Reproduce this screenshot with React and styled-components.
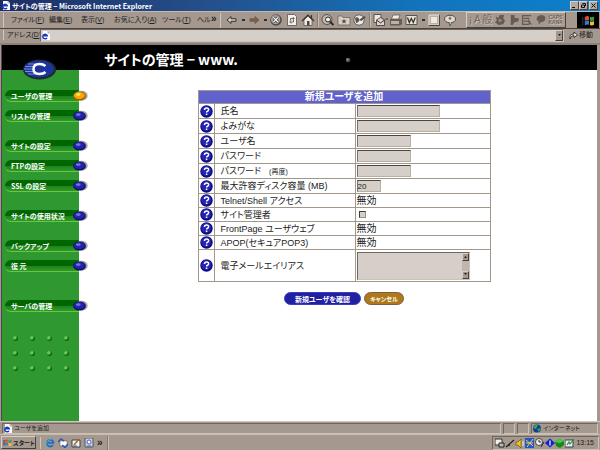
import React, { useState } from "react";
import styled, { createGlobalStyle, css } from "styled-components";

const GlobalStyle = createGlobalStyle`
  * {
    box-sizing: border-box;
  }
  body {
    margin: 0;
    background: #fff;
    color: #222;
    font-family: "Liberation Sans", "Noto Sans CJK JP", sans-serif;
    font-feature-settings: "palt";
    font-size: 8px;
    line-height: 10px;
  }
  button, input, textarea {
    font: inherit;
    font-feature-settings: inherit;
    color: inherit;
    margin: 0;
    padding: 0;
    border: 0;
    border-radius: 0;
  }
  a {
    color: inherit;
    text-decoration: none;
  }
`;

const raised = css`
  border: 1px solid;
  border-color: #d8d0c8 #48403c #48403c #d8d0c8;
`;

const sunken = css`
  border: 1px solid;
  border-color: #706860 #cac2b8 #cac2b8 #706860;
`;

const Window = styled.div`
  display: flex;
  flex-direction: column;
  min-height: 100vh;
  background: #a5988f;
`;

const TitleBar = styled.header`
  display: flex;
  align-items: center;
  height: 11px;
  padding: 0 2px 0 1px;
  gap: 1px;
  background: linear-gradient(90deg, #1d2d64, #24508c 35%, #1274bc 70%, #0c80cc);
  color: #fff;
  font-weight: 700;
  white-space: nowrap;
`;

const WindowTitle = styled.span`
  flex: 1 1 auto;
  font-family: "Noto Sans CJK JP", sans-serif;
  font-size: 7px;
`;

const WindowButtons = styled.div`
  display: flex;
`;

const WindowButton = styled.button`
  ${raised}
  display: flex;
  width: 9px;
  height: 9px;
  background: #b4a8a0;
  &:last-child {
    margin-left: 1px;
  }
`;

const ToolRow = styled.div`
  display: flex;
  align-items: center;
  height: 18px;
  border-top: 1px solid #c4bab0;
  border-bottom: 1px solid #4c443c;
`;

const Menu = styled.nav`
  display: flex;
  align-items: center;
  width: 217px;
  height: 15px;
  padding-left: 7px;
  margin-left: 3px;
  border-left: 1px solid #d0c8c0;
  white-space: nowrap;
  font-size: 7px;
`;

const MenuItem = styled.button`
  flex: 0 0 auto;
  width: ${props => props.$width}px;
  background: none;
  text-align: left;
  white-space: nowrap;
`;

const More = styled.span`
  font-size: 10px;
  font-weight: 700;
  line-height: 12px;
  align-self: flex-start;
`;

const Tools = styled.div`
  display: flex;
  align-items: center;
  flex: 1 1 auto;
  height: 15px;
  padding-left: 3px;
  border-left: 1px solid #d0c8c0;
`;

const ToolButton = styled.button`
  display: flex;
  width: 16px;
  height: 14px;
  background: none;
`;

const Caret = styled.span`
  width: 6px;
  height: 2px;
  background: linear-gradient(#332d28, #332d28) center / 3px 2px no-repeat;
`;

const ToolSeparator = styled.span`
  width: 2px;
  height: 14px;
  margin: 0 1px;
  background: #857a70;
  border-right: 1px solid #c8beb4;
`;

const ImeBar = styled.div`
  ${raised}
  display: flex;
  align-items: center;
  justify-content: space-between;
  width: 100px;
  height: 16px;
  padding: 0 2px;
  margin-right: 11px;
  color: #70665e;
  text-shadow: 1px 1px #cfc5bc;
  font-size: 10px;
`;

const ImeLocks = styled.span`
  font-size: 5px;
  line-height: 5px;
  font-weight: 700;
`;

const Throbber = styled.div`
  display: flex;
  align-items: center;
  justify-content: center;
  width: 22px;
  height: 16px;
  margin-right: 1px;
  background: #000;
`;

const AddressRow = styled.form`
  display: flex;
  align-items: center;
  height: 16px;
  padding: 0 2px 2px 3px;
  border-bottom: 2px solid #8c8078;
  font-size: 7px;
  label {
    width: 37px;
    padding-left: 3px;
    border-left: 1px solid #d0c8c0;
    white-space: nowrap;
  }
`;

const AddressField = styled.div`
  ${sunken}
  display: flex;
  align-items: center;
  flex: 1 1 auto;
  height: 13px;
  background: #d6cec8;
  input {
    flex: 1 1 auto;
    min-width: 0;
    height: 10px;
    background: transparent;
  }
`;

const DropButton = styled.button`
  ${raised}
  display: flex;
  align-items: center;
  justify-content: center;
  width: 8px;
  height: 11px;
  background: #a5988f;
`;

const GoButton = styled.button`
  display: flex;
  align-items: center;
  justify-content: center;
  gap: 1px;
  width: 34px;
  height: 12px;
  background: none;
  font-size: 7px;
  white-space: nowrap;
`;

const Page = styled.div`
  display: flex;
  flex-direction: column;
  flex: 1 1 auto;
  margin: 0 3px 0 1px;
  border-left: 1px solid #504850;
  background: #fff;
`;

const Banner = styled.div`
  position: relative;
  height: 25px;
  padding: 5px 0 0 102px;
  background: #000;
  color: #fff;
  h1 {
    margin: 0;
    font-family: "Noto Sans CJK JP", sans-serif;
    font-size: 14px;
    font-weight: 700;
    line-height: 18px;
  }
`;

const Logo = styled.svg`
  position: absolute;
  left: 20px;
  top: 13px;
`;

const Speck = styled.svg`
  position: absolute;
  left: 343px;
  top: 12px;
`;

const Columns = styled.div`
  display: flex;
  flex: 1 1 auto;
`;

const Sidebar = styled.nav`
  flex: 0 0 auto;
  width: 77px;
  padding: 20px 0 0 3px;
  background: #309830;
`;

const NavList = styled.ul`
  display: flex;
  flex-direction: column;
  gap: 8px;
  list-style: none;
  margin: 0 -9px 24px 0;
  padding: 0;
`;

const NavItem = styled.li`
  margin-top: ${props => props.$space || 0}px;
`;

const NavLink = styled.a`
  display: grid;
  grid-template-columns: 1fr 15px;
  align-items: center;
  height: 12px;
  color: #fff;
  font-family: "Noto Sans CJK JP", sans-serif;
  font-size: 7px;
  font-weight: 700;
  white-space: nowrap;
  span {
    height: 12px;
    padding-left: 6px;
    line-height: 12px;
    border-radius: 8px 0 0 8px;
    border-bottom: 1px solid #66cc33;
    background: linear-gradient(#006600 50%, #1c801c 51%, #309830);
    margin-right: -6px;
  }
  svg {
    position: relative;
  }
`;

const Studs = styled.div`
  display: grid;
  grid-template-columns: repeat(4, 17px);
  row-gap: 10px;
  padding-left: 8px;
`;

const Stud = styled.i`
  width: 5px;
  height: 5px;
  border-radius: 50%;
  background: radial-gradient(circle at 30% 30%, #6cc850 25%, #0c640c 60%);
`;

const Main = styled.main`
  display: flex;
  flex-direction: column;
  align-items: center;
  flex: 1 1 auto;
  padding: 20px 0 0 12px;
`;

const FormTable = styled.table`
  width: 293px;
  table-layout: fixed;
  border-collapse: collapse;
  font-size: 10px;
  line-height: 12px;
  th, td {
    border: 1px solid #a0988a;
    padding: 0;
    font-weight: 400;
    text-align: left;
  }
  thead th {
    height: 13px;
    background: #6262ce;
    color: #fff;
    font-weight: 700;
    text-align: center;
  }
  small {
    font-size: 7px;
    margin-left: 8px;
  }
`;

const Row = styled.tr`
  height: ${props => props.$height}px;
  && th {
    padding-left: 6px;
    font-size: 9px;
  }
  && td:last-child {
    padding-left: 1px;
  }
`;

const HelpButton = styled.button`
  display: block;
  width: 13px;
  height: 13px;
  margin: 0 auto;
  background: none;
`;

const Field = styled.input`
  display: block;
  width: ${props => props.$width}px;
  height: 12px;
  border: 1px solid;
  border-color: #48483c #b8b0a0 #b8b0a0 #78706c;
  background: #d6cec8;
  font-size: 8px;
  line-height: 10px;
`;

const Check = styled.input`
  appearance: none;
  display: block;
  width: 7px;
  height: 7px;
  && {
    margin-left: 2px;
    border: 1px solid;
    border-color: #403c38 #98908a #98908a #403c38;
  }
  background: #d6cec8;
  &:checked {
    background: #333;
  }
`;

const AliasBox = styled.div`
  ${sunken}
  display: flex;
  width: 113px;
  height: 28px;
  background: #d6cec8;
  textarea {
    flex: 1 1 auto;
    min-width: 0;
    resize: none;
    overflow: hidden;
    background: transparent;
  }
`;

const ScrollRail = styled.div`
  display: flex;
  flex-direction: column;
  justify-content: space-between;
  width: 8px;
  background: #c0b6ac;
`;

const ScrollButton = styled.button`
  ${raised}
  display: flex;
  align-items: center;
  justify-content: center;
  height: 8px;
  background: #a5988f;
`;

const Actions = styled.div`
  display: flex;
  gap: 3px;
  margin-top: 10px;
`;

const PillButton = styled.button`
  width: ${props => (props.$primary ? 77 : 40)}px;
  height: 13px;
  border-radius: 7px;
  border: 1px solid ${props => (props.$primary ? "#3c3cc4" : "#78604c")};
  background: ${props => (props.$primary ? "#2020a0" : "#b07818")};
  color: #fff;
  font-family: "Noto Sans CJK JP", sans-serif;
  font-size: ${props => (props.$primary ? 7 : 6)}px;
  font-weight: 700;
  line-height: 10px;
  white-space: nowrap;
`;

const StatusBar = styled.footer`
  display: flex;
  align-items: center;
  gap: 2px;
  height: 14px;
  padding: 1px 2px;
  border-top: 1px solid #d0c8c0;
  border-bottom: 1px solid #c8beac;
  font-size: 6px;
`;

const StatusPane = styled.div`
  ${sunken}
  display: flex;
  align-items: center;
  gap: 1px;
  flex: ${props => (props.$width ? `0 0 ${props.$width}px` : "1 1 auto")};
  height: 11px;
  white-space: nowrap;
`;

const TaskBar = styled.div`
  display: flex;
  align-items: center;
  height: 15px;
  padding: 0 1px;
`;

const StartButton = styled.button`
  ${raised}
  display: flex;
  align-items: center;
  gap: 1px;
  width: 35px;
  height: 13px;
  padding-left: 1px;
  background: #a5988f;
  font-size: 6px;
  font-weight: 700;
  white-space: nowrap;
`;

const QuickLaunch = styled.div`
  display: flex;
  align-items: center;
  gap: 3px;
  flex: 1 1 auto;
  height: 12px;
  padding-left: 4px;
  margin-left: 4px;
  border-left: 1px solid #d0c8c0;
`;

const LaunchButton = styled.button`
  display: flex;
  width: 10px;
  height: 10px;
  background: none;
`;

const Tray = styled.div`
  ${sunken}
  display: flex;
  align-items: center;
  width: 107px;
  height: 14px;
  padding-left: 2px;
  time {
    margin-left: auto;
    padding-right: 4px;
    font-size: 7px;
  }
`;

const PageIcon = () => (
  <svg width="10" height="9" viewBox="0 0 10 9">
    <path d="M2 0h5l2 2v7H2z" fill="#fff" />
    <path d="M7 0v2h2" fill="none" stroke="#777" strokeWidth=".6" />
    <path d="M6 6.800A2.300 2.300 0 1 1 6.300 4.800H2.200" fill="none" stroke="#1838c8" strokeWidth="1.400" />
  </svg>
);

const Flag = ({ width, height, trail = "#345a98" }) => (
  <svg width={width} height={height} viewBox="0 0 13 11">
    <path d="M0 3h3M0 5h3M0 7h3M0 9h3" stroke={trail} strokeWidth="1" strokeDasharray="1 .6" />
    <path d="M3 2q2-1.500 4-.5v3.800q-2-1-4 .5z" fill="#e05028" />
    <path d="M8 1.800q2 1 4-.3v3.700q-2 1.300-4 .4z" fill="#38a048" />
    <path d="M3 6.500q2-1.500 4-.5v3.800q-2-1-4 .5z" fill="#3878d8" />
    <path d="M8 6.300q2 1 4-.3v3.700q-2 1.300-4 .4z" fill="#e8c028" />
  </svg>
);

const Orb = ({ active }) => (
  <svg width="15" height="12" viewBox="0 0 15 12">
    <ellipse cx="8.500" cy="5.700" rx="6.200" ry="5" fill="#a8a8a4" />
    <ellipse cx="6.500" cy="6" rx="6.400" ry="4.500" fill={active ? "#a85c00" : "#10106c"} />
    <ellipse cx="6.300" cy="5.600" rx="5.400" ry="3.500" fill={active ? "#f8a800" : "#2424ac"} />
    <ellipse cx="5.300" cy="4.600" rx="2.400" ry="1.400" fill={active ? "#ffe860" : "#7474dc"} />
  </svg>
);

const HelpIcon = () => (
  <svg width="13" height="13" viewBox="0 0 13 13">
    <circle cx="6.500" cy="6.500" r="6.200" fill="#0c0c80" />
    <circle cx="6.200" cy="6" r="5" fill="#2424b0" />
    <path d="M4.500 5q0-2 2.100-2t2 1.800q0 .9-1.100 1.400-.9.4-.9 1.300M6.600 8.600v1.500" fill="none" stroke="#fff" strokeWidth="1.500" />
  </svg>
);

const Triangle = ({ up }) => (
  <svg width="5" height="3" viewBox="0 0 5 3">
    <path d={up ? "M1 3h3L2.500 1z" : "M1 0h3L2.500 2z"} fill="#221e1a" />
  </svg>
);

const toolDrawings = {
  back: <path d="M3 7l4-3.500v2.200h5v2.600H7v2.200z" fill="#d0c8c0" stroke="#39342f" />,
  forward: <path d="M13 7L9 3.500v2.200H4v2.600h5v2.200z" fill="#78604c" stroke="#78604c" />,
  stop: (
    <>
      <circle cx="8" cy="7" r="5.800" fill="#514b47" />
      <circle cx="7.600" cy="6.600" r="4.600" fill="#a9a4a0" />
      <path d="M5.500 4.500l4.500 4.500M10 4.500L5.500 9" stroke="#342f2b" strokeWidth="2.500" />
      <path d="M5.500 4.500l4.500 4.500M10 4.500L5.500 9" stroke="#fff" strokeWidth="1.200" />
    </>
  ),
  refresh: (
    <>
      <path d="M3.500 1.500h7l2 2v9h-9z" fill="#f2f0ed" stroke="#5d554d" strokeWidth=".8" />
      <path d="M10 5.500H6.500v2M6 9h3.500V7M8.800 4l1.500 1.500L8.800 7M7.200 7.500L5.700 9l1.500 1.500" fill="none" stroke="#625a50" strokeWidth=".9" />
    </>
  ),
  home: (
    <>
      <path d="M4 7v5.500h8V7L8 3z" fill="#eeeae4" stroke="#504840" strokeWidth=".7" />
      <path d="M2 8l6-6 6 6M11.500 5V2" fill="none" stroke="#39332e" strokeWidth="1.200" />
      <path d="M7 8h2.500v4.500H7z" fill="#4c443e" />
    </>
  ),
  search: (
    <>
      <circle cx="7" cy="6.500" r="5" fill="#c2bab2" stroke="#58504a" />
      <circle cx="8" cy="6.500" r="2.500" fill="#eee" stroke="#2c2824" />
      <path d="M9.800 8.500l3.700 3.500" stroke="#2c2824" strokeWidth="1.800" />
    </>
  ),
  favorites: (
    <>
      <path d="M2 3h4l1 1.500h7V12H2z" fill="#d8d0c6" stroke="#6d655e" strokeWidth=".8" />
      <path d="M8 5.800l.8 1.600 1.800.1-1.400 1.200.5 1.800L8 9.600l-1.600.9.4-1.800-1.400-1.200 1.800-.1z" fill="#544c46" />
    </>
  ),
  history: (
    <>
      <circle cx="7" cy="7" r="5.200" fill="#eee9e4" stroke="#645e58" />
      <path d="M7 7l5-4 2 1-4.500 4zM3 5q3-2 4 1t-3 4z" fill="#58534e" />
    </>
  ),
  mail: (
    <>
      <path d="M2 1.500h7v8H2z" fill="#eee9e4" stroke="#5c544c" />
      <path d="M4.500 7l4-2.500 4 2.500v5.500h-8z" fill="#ddd5cd" stroke="#38332e" strokeWidth=".8" />
      <path d="M4.500 7l4 3 4-3M13.500 6h2.500" fill="none" stroke="#38332e" />
    </>
  ),
  print: (
    <>
      <path d="M5 2h7l-1.500 4h-7z" fill="#f0ece7" stroke="#59514a" strokeWidth=".7" />
      <path d="M2 6h12v5l-2 1.500H2z" fill="#655d56" />
      <path d="M3 8h8v3H3z" fill="#bab1a8" />
    </>
  ),
  word: (
    <>
      <path d="M2 2.500h11v9H2z" fill="#e7e1da" stroke="#59544e" />
      <path d="M3.500 4.500l1.800 5 2-4 2 4 2-5" fill="none" stroke="#38332e" strokeWidth="1.300" />
    </>
  ),
  edit: (
    <>
      <path d="M3 2h10v10H3z" fill="#b7aea4" stroke="#e9e5df" />
      <path d="M5 4h6v6H5z" fill="#eee9e2" />
      <path d="M13.500 2v10.500H3" fill="none" stroke="#4c443d" />
    </>
  ),
  discuss: (
    <>
      <ellipse cx="8" cy="6" rx="5.500" ry="3.800" fill="#e1dbd4" stroke="#504942" />
      <path d="M7 9.500l1 3.500 2-4" fill="#d5ccc2" stroke="#504942" strokeWidth=".8" />
      <path d="M8 3.500v3.500M6.500 5.300h3" stroke="#67605a" />
    </>
  )
};

const tools = [
  "back", "caret", "forward", "caret", "stop", "refresh", "home", "line",
  "search", "favorites", "history", "line", "mail", "print", "word", "caret",
  "edit", "discuss"
];

const imeDrawings = [
  <path d="M2 3l3 1 1-3h5l-1 4 2 2-2 4-5 1-4-3 2-2zM5 6v2h3V6z" fillRule="evenodd" />,
  <path d="M3 1h4v3l5 1-1 3-4 1-2 3H3z" />,
  <path d="M1 1h10v1.500H1zM3 4h6v1.500H3zM3 7h6v1.500H3zM1 1h1.500v11H1zM1 10.500h8V12H1zM8 5l4 7-4-2z" />,
  <path d="M2 4q1-3 6-3 4 1 3 5-1 3-5 3l-2 3V8Q1 7 2 4z" />
];

const menus = [
  { label: "ファイル", hotkey: "F", width: 38 },
  { label: "編集", hotkey: "E", width: 32 },
  { label: "表示", hotkey: "V", width: 33 },
  { label: "お気に入り", hotkey: "A", width: 48 },
  { label: "ツール", hotkey: "T", width: 35 }
];

const navItems = [
  { label: "ユーザの管理", active: true },
  { label: "リストの管理" },
  { label: "サイトの設定", space: 10 },
  { label: "FTPの設定" },
  { label: "SSL の設定" },
  { label: "サイトの使用状況", space: 10 },
  { label: "バックアップ", space: 10 },
  { label: "復 元" },
  { label: "サーバの管理", space: 20 }
];

const fields = [
  { id: "fullname", label: "氏名", width: 83 },
  { id: "kana", label: "よみがな", width: 83 },
  { id: "username", label: "ユーザ名", width: 54 },
  { id: "password", label: "パスワード", width: 54, type: "password" },
  { id: "password2", label: "パスワード", note: "(再度)", width: 54, type: "password" },
  { id: "quota", label: "最大許容ディスク容量 (MB)", width: 24 },
  { id: "telnet", label: "Telnet/Shell アクセス", text: "無効" },
  { id: "admin", label: "サイト管理者", type: "checkbox" },
  { id: "frontpage", label: "FrontPage ユーザウェブ", text: "無効" },
  { id: "apop", label: "APOP(セキュアPOP3)", text: "無効" },
  { id: "aliases", label: "電子メールエイリアス", type: "textarea" }
];

const launchers = [
  {
    name: "Internet Explorer",
    icon: (
      <>
        <path d="M8 7A3.300 3.300 0 1 1 8.500 4.800H3" fill="none" stroke="#1c70c0" strokeWidth="1.800" />
        <path d="M1 8Q0 5 4 2t5-1" fill="none" stroke="#48b0e0" />
      </>
    )
  },
  {
    name: "Outlook Express",
    icon: (
      <>
        <path d="M2 3h7v5H2z" fill="#fff" stroke="#555" strokeWidth=".5" />
        <path d="M0 4l3-3 3 2M10 6L7 9.500 4 7" fill="none" stroke="#2858b8" strokeWidth="1.500" />
      </>
    )
  },
  {
    name: "デスクトップの表示",
    icon: (
      <>
        <path d="M1 2h8v7H1z" fill="#f4f4ec" stroke="#345" />
        <path d="M3 7l5-6" stroke="#b06818" strokeWidth="1.500" />
        <path d="M2 8h4" stroke="#2858b8" />
      </>
    )
  },
  {
    name: "チャンネルの表示",
    icon: (
      <>
        <path d="M1 0h8v9H1z" fill="#c8d0e8" stroke="#556" />
        <circle cx="5" cy="4" r="2" fill="#fff" stroke="#4868a8" />
        <path d="M3 8h4" stroke="#4868a8" />
      </>
    )
  }
];

const trayIcons = [
  <><path d="M0 1h7v6H0z" fill="#eee" stroke="#333" /><path d="M4 5h5v4H4z" fill="#bbb" stroke="#222" /></>,
  <path d="M1 9l8-7M2 8l3-1" fill="none" stroke="#222" strokeWidth="1.200" />,
  <><path d="M1 4h2l3-3v9L3 7H1z" fill="#f0c818" stroke="#5c4808" strokeWidth=".6" /><path d="M8 3v5" stroke="#eee" /></>,
  <><path d="M0 0h9v10H0z" fill="#2454c8" /><path d="M1 2l7 6M8 1L2 9M1 5h7" stroke="#e8d858" /></>,
  <><circle cx="4" cy="4" r="3.500" fill="#eee" stroke="#444" /><path d="M4 2v2h2M6 9l3-5" stroke="#222" fill="none" /></>,
  <><path d="M0 5l5-4.500L10 5 5 9.500z" fill="#1020d0" /><path d="M5 2.500v5" stroke="#fff" strokeWidth="1.200" /></>,
  <><path d="M0 4l4-3 5 2v4L5 10 1 8z" fill="#18881c" /><path d="M0 4l4-3 5 2-4 2z" fill="#40d040" /></>,
  <><path d="M0 2h8v7H0z" fill="#eee" stroke="#345" /><path d="M2 7l2-3 1 2 4-5" fill="none" stroke="#209830" strokeWidth="1.200" /></>
];

const FieldControl = ({ field, value, onChange }) => {
  if (field.text) return field.text;
  if (field.type === "checkbox") return <Check type="checkbox" id={field.id} />;
  if (field.type === "textarea") {
    return (
      <AliasBox>
        <textarea id={field.id} />
        <ScrollRail>
          <ScrollButton type="button" aria-label="上へ"><Triangle up /></ScrollButton>
          <ScrollButton type="button" aria-label="下へ"><Triangle /></ScrollButton>
        </ScrollRail>
      </AliasBox>
    );
  }
  return (
    <Field
      id={field.id}
      type={field.type || "text"}
      $width={field.width}
      value={value}
      onChange={onChange}
    />
  );
};

function rowHeight(field) {
  if (field.type === "textarea") return 32;
  return field.width ? 15 : 14;
}

const UserForm = () => {
  const [values, setValues] = useState({ quota: "20" });

  return (
    <>
      <FormTable>
        <colgroup>
          <col width="16" />
          <col width="141" />
          <col />
        </colgroup>
        <thead>
          <tr>
            <th colSpan="3">新規ユーザを追加</th>
          </tr>
        </thead>
        <tbody>
          {fields.map(field => (
            <Row key={field.id} $height={rowHeight(field)}>
              <td>
                <HelpButton type="button" aria-label="ヘルプ"><HelpIcon /></HelpButton>
              </td>
              <th scope="row">
                {field.text ? field.label : (
                  <label htmlFor={field.id}>
                    {field.label}
                    {field.note && <small>{field.note}</small>}
                  </label>
                )}
              </th>
              <td>
                <FieldControl
                  field={field}
                  value={values[field.id] || ""}
                  onChange={e => setValues({ ...values, [field.id]: e.target.value })}
                />
              </td>
            </Row>
          ))}
        </tbody>
      </FormTable>
      <Actions>
        <PillButton type="button" $primary>新規ユーザを確認</PillButton>
        <PillButton type="button">キャンセル</PillButton>
      </Actions>
    </>
  );
};

const BrowserBars = () => (
  <>
    <TitleBar>
      <PageIcon />
      <WindowTitle>サイトの管理 − Microsoft Internet Explorer</WindowTitle>
      <WindowButtons>
        <WindowButton aria-label="最小化">
          <svg width="7" height="7"><path d="M1 5.500h3" stroke="#111" /></svg>
        </WindowButton>
        <WindowButton aria-label="元に戻す">
          <svg width="7" height="7"><path d="M2.500 1.500h3v2.500M1.500 3h3v2.500h-3z" fill="none" stroke="#111" /></svg>
        </WindowButton>
        <WindowButton aria-label="閉じる">
          <svg width="7" height="7"><path d="M1.500 1.500l4 4M5.500 1.500l-4 4" stroke="#111" /></svg>
        </WindowButton>
      </WindowButtons>
    </TitleBar>
    <ToolRow>
      <Menu>
        {menus.map(menu => (
          <MenuItem key={menu.hotkey} $width={menu.width}>
            {menu.label}(<u>{menu.hotkey}</u>)
          </MenuItem>
        ))}
        <MenuItem $width={14}>ヘル</MenuItem>
        <More>»</More>
      </Menu>
      <Tools>
        {tools.map((tool, id) => {
          if (tool === "caret") return <Caret key={id} />;
          if (tool === "line") return <ToolSeparator key={id} />;
          return (
            <ToolButton key={id} aria-label={tool}>
              <svg width="16" height="14" viewBox="0 0 16 14">{toolDrawings[tool]}</svg>
            </ToolButton>
          );
        })}
      </Tools>
      <ImeBar>
        <span>¡</span>
        <span>A</span>
        <span>般</span>
        {imeDrawings.map((drawing, id) => (
          <svg key={id} width="12" height="12" viewBox="0 0 13 13" fill="#665b53">{drawing}</svg>
        ))}
        <ImeLocks>CAPS<br />KANA</ImeLocks>
      </ImeBar>
      <Throbber><Flag width={13} height={11} /></Throbber>
    </ToolRow>
    <AddressRow onSubmit={e => e.preventDefault()}>
      <label htmlFor="address">アドレス(<u>D</u>)</label>
      <AddressField>
        <PageIcon />
        <input id="address" type="text" />
        <DropButton type="button" aria-label="履歴"><Triangle /></DropButton>
      </AddressField>
      <GoButton>
        <svg width="9" height="9" viewBox="0 0 9 9">
          <path d="M1 8Q0 3 5 3V1l3.500 3L5 6.500v-2Q2 4.500 1 8z" fill="#e8e2dc" stroke="#222" strokeWidth=".8" />
        </svg>
        移動
      </GoButton>
    </AddressRow>
  </>
);

const Sidemenu = () => (
  <Sidebar>
    <NavList>
      {navItems.map(item => (
        <NavItem key={item.label} $space={item.space}>
          <NavLink href="#">
            <span>{item.label}</span>
            <Orb active={item.active} />
          </NavLink>
        </NavItem>
      ))}
    </NavList>
    <Studs>
      {Array.from({ length: 12 }, (_, id) => <Stud key={id} />)}
    </Studs>
  </Sidebar>
);

const App = () => (
  <>
    <GlobalStyle />
    <Window>
      <BrowserBars />
      <Page>
        <Banner>
          <h1>サイトの管理 − www.</h1>
          <Logo width="35" height="22" viewBox="0 0 35 22">
            <ellipse cx="17.500" cy="11.500" rx="16.500" ry="10" fill="#1c2c34" />
            <ellipse cx="17" cy="11" rx="14.800" ry="8.500" fill="#1c349c" />
            <path d="M6 6h9M3 8.500h8M2 11h9M3 13.500h8M6 16h8" stroke="#7890dc" strokeWidth="1" />
            <path d="M23.500 8Q21 6 17.500 6q-6 0-6 5t6 5q4 0 6-2" fill="none" stroke="#fff" strokeWidth="2.500" />
          </Logo>
          <Speck width="6" height="6">
            <circle cx="3" cy="3" r="2.300" fill="#555" />
            <circle cx="2.500" cy="2.500" r="1" fill="#999" />
          </Speck>
        </Banner>
        <Columns>
          <Sidemenu />
          <Main>
            <UserForm />
          </Main>
        </Columns>
      </Page>
      <StatusBar>
        <StatusPane><PageIcon />ユーザを追加</StatusPane>
        <StatusPane $width={12} />
        <StatusPane $width={12} />
        <StatusPane $width={67}>
          <svg width="10" height="9" viewBox="0 0 10 9">
            <circle cx="5" cy="4.500" r="4" fill="#1838a0" />
            <path d="M1 4q2-4 5-3L4 5zM5 5l4-1-2 4z" fill="#30b040" />
          </svg>
          インターネット
        </StatusPane>
      </StatusBar>
      <TaskBar>
        <StartButton><Flag width={11} height={9} trail="#111" />スタート</StartButton>
        <QuickLaunch>
          {launchers.map(item => (
            <LaunchButton key={item.name} aria-label={item.name}>
              <svg width="10" height="10" viewBox="0 0 10 10">{item.icon}</svg>
            </LaunchButton>
          ))}
          <More>»</More>
          <ToolSeparator />
        </QuickLaunch>
        <Tray>
          {trayIcons.map((icon, id) => (
            <svg key={id} width="10" height="10" viewBox="0 0 10 10">{icon}</svg>
          ))}
          <time>13:15</time>
        </Tray>
      </TaskBar>
    </Window>
  </>
);

export default App;
